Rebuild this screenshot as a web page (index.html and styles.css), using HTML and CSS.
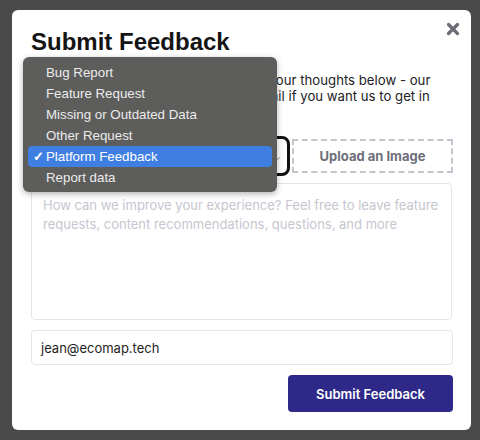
FILE: index.html
```html
<!DOCTYPE html>
<html>

<head>
    <meta charset="utf-8">
    <title>Submit Feedback</title>
    <link rel="stylesheet" href="styles.css">
</head>

<body>
    <div id="modal">
        <button class="close" aria-label="Close">
            <svg width="14" height="14" viewBox="0 0 14 14">
                <path d="M2.5 2.5 L11.5 11.5 M11.5 2.5 L2.5 11.5" stroke="#6b6b76" stroke-width="3.2" stroke-linecap="round" />
            </svg>
        </button>
        <h1>Submit Feedback</h1>
        <p class="intro">Choose the feedback type, and share your thoughts below - our<br>team will be happy to reach out via email if you want us to get in<br>touch.</p>
        <div class="row">
            <div class="select">
                <span>Platform Feedback</span>
                <span class="chevron">&#8964;</span>
            </div>
            <div class="upload">Upload an Image</div>
        </div>
        <div class="textarea">How can we improve your experience? Feel free to leave feature requests, content recommendations, questions, and more</div>
        <div class="input">jean@ecomap.tech</div>
        <div class="actions">
            <button class="submit">Submit Feedback</button>
        </div>

        <div class="menu">
            <div class="item">Bug Report</div>
            <div class="item">Feature Request</div>
            <div class="item">Missing or Outdated Data</div>
            <div class="item">Other Request</div>
            <div class="item selected"><span class="check">&#10003;</span>Platform Feedback</div>
            <div class="item">Report data</div>
        </div>
    </div>
</body>

</html>
```

FILE: styles.css
```css
body {
    margin: 0;
    padding: 10px 9px 10px 12px;
    background: #4a4a4a;
    font-family: Inter, "Liberation Sans", sans-serif;
    height: 420px;
}

#modal {
    position: relative;
    height: 420px;
    box-sizing: border-box;
    background: #fff;
    border-radius: 6px;
    padding: 17px 18px 0 19px;
    display: flex;
    flex-direction: column;
}

.close {
    position: absolute;
    top: 12px;
    right: 11px;
    border: none;
    background: none;
    padding: 0;
    width: 14px;
    height: 14px;
}

h1 {
    margin: 0;
    font-family: "Liberation Sans", Arial, sans-serif;
    font-size: 24px;
    line-height: 30px;
    color: #151515;
}

.intro {
    margin: 15px 0 0;
    font-size: 13.2px;
    line-height: 16px;
    color: #222226;
    white-space: nowrap;
}

.row {
    display: flex;
    align-items: center;
    gap: 2px;
    margin-top: 16px;
}

.select {
    width: 259px;
    height: 40px;
    box-sizing: border-box;
    border: 3px solid #111;
    border-radius: 8px;
    display: flex;
    align-items: center;
    justify-content: space-between;
    padding: 0 6px 0 12px;
    font-size: 13px;
    color: #333;
}

.chevron {
    font-size: 9px;
    color: #999;
}

.upload {
    flex: 1;
    height: 34px;
    box-sizing: border-box;
    border: 2px dashed #c4c4cc;
    display: flex;
    align-items: center;
    justify-content: center;
    font-weight: 700;
    font-size: 13px;
    color: #6e6e7a;
}

.textarea {
    margin-top: 7px;
    height: 137px;
    box-sizing: border-box;
    border: 1px solid #e4e4ea;
    border-radius: 4px;
    padding: 12px 11px;
    font-size: 13px;
    line-height: 19px;
    color: #c6c6d0;
    margin-right: 1px;
}

.input {
    margin-top: 10px;
    height: 35px;
    box-sizing: border-box;
    border: 1px solid #e4e4ea;
    border-radius: 4px;
    padding: 0 9px;
    display: flex;
    align-items: center;
    font-size: 13px;
    color: #1e1e22;
}

.actions {
    display: flex;
    justify-content: flex-end;
    margin-top: 10px;
}

.submit {
    width: 165px;
    height: 37px;
    border: none;
    border-radius: 4px;
    background: #2e2988;
    color: #fff;
    font-family: Inter, "Liberation Sans", sans-serif;
    font-weight: 600;
    font-size: 13px;
}

.menu {
    position: absolute;
    left: 11px;
    top: 47px;
    width: 254px;
    box-sizing: border-box;
    padding: 5px 5px 4px;
    background: #5d5d5c;
    border-radius: 6px;
    box-shadow: 0 2px 6px rgba(0, 0, 0, 0.3);
    font-family: "Liberation Sans", Arial, sans-serif;
    font-size: 13.3px;
    color: #ececec;
}

.item {
    height: 21px;
    line-height: 21px;
    padding-left: 18px;
    border-radius: 4px;
    position: relative;
}

.item.selected {
    background: #3f7fe2;
    color: #fff;
}

.check {
    position: absolute;
    left: 5px;
    font-size: 13px;
    font-weight: 700;
}
```
